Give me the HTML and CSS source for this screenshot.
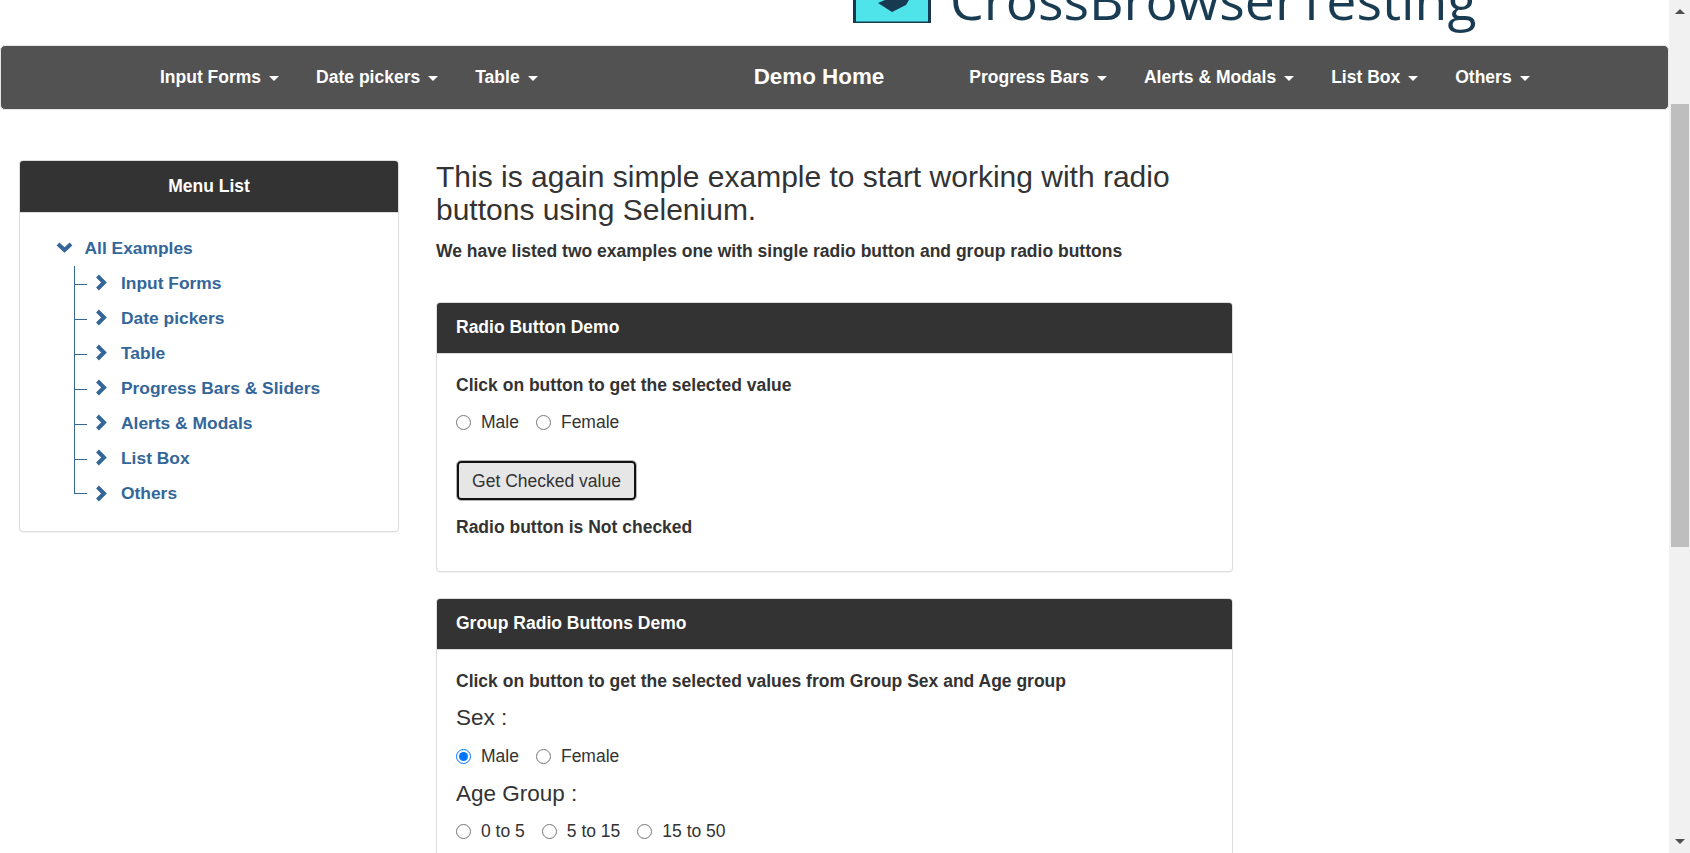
FILE: index.html
```html
<!DOCTYPE html>
<html lang="en">
<head>
    <meta charset="UTF-8">
    <title>Radio buttons demo</title>
    <link rel="stylesheet" href="styles.css">
</head>
<body>
    <div class="page">
        <!-- logo, page is scrolled so the top is cut off -->
        <div class="logo-row">
            <svg class="logo-icon" width="78" height="23" viewBox="0 0 78 23">
                <rect x="1.500" y="-20" width="75" height="43" fill="#4fe3ea" stroke="#173a50" stroke-width="3"/>
                <path d="M25 3 L32 0 L56 0 L53 5 L39 12 Z" fill="#173a50"/>
            </svg>
            <span class="logo-text">CrossBrowserTesting</span>
        </div>

        <nav class="navbar">
            <a class="nav-link nav-input">Input Forms<span class="caret"></span></a>
            <a class="nav-link nav-date">Date pickers<span class="caret"></span></a>
            <a class="nav-link nav-table">Table<span class="caret"></span></a>
            <a class="nav-brand">Demo Home</a>
            <a class="nav-link nav-progress">Progress Bars<span class="caret"></span></a>
            <a class="nav-link nav-alerts">Alerts &amp; Modals<span class="caret"></span></a>
            <a class="nav-link nav-list">List Box<span class="caret"></span></a>
            <a class="nav-link">Others<span class="caret"></span></a>
        </nav>

        <div class="content">
            <aside class="panel side-panel">
                <div class="panel-heading menu-heading">Menu List</div>
                <div class="tree-body">
                    <div class="tree-root">
                        <svg class="chev-down" width="17" height="11" viewBox="0 0 17 11"><path d="M2 2 L8.500 8 L15 2" fill="none" stroke="#369" stroke-width="4"/></svg>
                        <a>All Examples</a>
                    </div>
                    <ul class="tree">
                        <li><svg class="chev" width="12" height="17" viewBox="0 0 12 17"><path d="M2.500 2 L9 8.500 L2.500 15" fill="none" stroke="#369" stroke-width="4"/></svg><a>Input Forms</a></li>
                        <li><svg class="chev" width="12" height="17" viewBox="0 0 12 17"><path d="M2.500 2 L9 8.500 L2.500 15" fill="none" stroke="#369" stroke-width="4"/></svg><a>Date pickers</a></li>
                        <li><svg class="chev" width="12" height="17" viewBox="0 0 12 17"><path d="M2.500 2 L9 8.500 L2.500 15" fill="none" stroke="#369" stroke-width="4"/></svg><a>Table</a></li>
                        <li><svg class="chev" width="12" height="17" viewBox="0 0 12 17"><path d="M2.500 2 L9 8.500 L2.500 15" fill="none" stroke="#369" stroke-width="4"/></svg><a>Progress Bars &amp; Sliders</a></li>
                        <li><svg class="chev" width="12" height="17" viewBox="0 0 12 17"><path d="M2.500 2 L9 8.500 L2.500 15" fill="none" stroke="#369" stroke-width="4"/></svg><a>Alerts &amp; Modals</a></li>
                        <li><svg class="chev" width="12" height="17" viewBox="0 0 12 17"><path d="M2.500 2 L9 8.500 L2.500 15" fill="none" stroke="#369" stroke-width="4"/></svg><a>List Box</a></li>
                        <li><svg class="chev" width="12" height="17" viewBox="0 0 12 17"><path d="M2.500 2 L9 8.500 L2.500 15" fill="none" stroke="#369" stroke-width="4"/></svg><a>Others</a></li>
                    </ul>
                </div>
            </aside>

            <main class="main-col">
                <h3 class="page-title">This is again simple example to start working with radio buttons using Selenium.</h3>
                <p class="intro">We have listed two examples one with single radio button and group radio buttons</p>

                <section class="panel demo-panel first-demo">
                    <div class="panel-heading">Radio Button Demo</div>
                    <div class="panel-body">
                        <p class="bold-line">Click on button to get the selected value</p>
                        <div class="radio-row single-row">
                            <label><input type="radio" name="one">Male</label>
                            <label><input type="radio" name="one">Female</label>
                        </div>
                        <button class="btn" type="button">Get Checked value</button>
                        <p class="bold-line result">Radio button is Not checked</p>
                    </div>
                </section>

                <section class="panel demo-panel">
                    <div class="panel-heading">Group Radio Buttons Demo</div>
                    <div class="panel-body">
                        <p class="bold-line">Click on button to get the selected values from Group Sex and Age group</p>
                        <h4 class="group-title sex-title">Sex :</h4>
                        <div class="radio-row">
                            <label><input type="radio" name="sex" checked>Male</label>
                            <label><input type="radio" name="sex">Female</label>
                        </div>
                        <h4 class="group-title age-title">Age Group :</h4>
                        <div class="radio-row">
                            <label><input type="radio" name="age">0 to 5</label>
                            <label><input type="radio" name="age">5 to 15</label>
                            <label><input type="radio" name="age">15 to 50</label>
                        </div>
                    </div>
                </section>
            </main>
        </div>
    </div>

    <div class="scrollbar">
        <span class="arrow-up"></span>
        <div class="thumb"></div>
        <span class="arrow-down"></span>
    </div>
</body>
</html>
```

FILE: styles.css
```css
html, body {
    height: 100%;
    margin: 0;
    overflow: hidden;
}

body {
    display: flex;
    font-family: "Liberation Sans", Arial, sans-serif;
    font-size: 17.5px;
    color: #333;
    background: #fff;
}

.page {
    flex: 1;
    height: 853px;
    overflow: hidden;
}

/* logo */
.logo-row {
    display: flex;
    align-items: flex-start;
    height: 45px;
    padding-left: 853px;
    overflow: hidden;
}

.logo-icon {
    flex: none;
}

.logo-text {
    margin: -40px 0 0 19px;
    font-family: "Open Sans", sans-serif;
    font-size: 53.6px;
    line-height: 80px;
    color: #1a3c52;
}

/* navbar */
.navbar {
    display: flex;
    align-items: center;
    height: 65px;
    padding-left: 159px;
    background: #525252;
    border-radius: 5px;
    box-sizing: border-box;
    border: 1px solid #e7e7e7;
    font-weight: bold;
    color: #fff;
}

.nav-link {
    margin-right: 37px;
}

.nav-brand {
    margin: 0 85px 2px 0;
    font-size: 22.4px;
}

.nav-table {
    margin-right: 216px;
}

.caret {
    display: inline-block;
    margin-left: 8px;
    vertical-align: middle;
    border-top: 5px solid #fff;
    border-left: 5px solid transparent;
    border-right: 5px solid transparent;
}

/* layout */
.content {
    display: flex;
    align-items: flex-start;
    padding: 50px 0 0 19px;
}

.panel {
    box-sizing: border-box;
    border: 1px solid #ddd;
    border-radius: 4px;
    background: #fff;
    box-shadow: 0 1px 1px rgba(0, 0, 0, .05);
}

.panel-heading {
    height: 51px;
    padding: 0 19px;
    line-height: 49px;
    background: #333;
    color: #fff;
    font-weight: bold;
    border-radius: 3px 3px 0 0;
    border-bottom: 1px solid #ddd;
    box-sizing: border-box;
}

/* side menu */
.side-panel {
    flex: none;
    width: 380px;
    height: 372px;
    margin-right: 37px;
}

.menu-heading {
    height: 52px;
    line-height: 50px;
    text-align: center;
}

.tree-body {
    padding: 18px 0 0 36px;
    color: #369;
    font-size: 17.4px;
    font-weight: bold;
}

.tree-root {
    display: flex;
    align-items: center;
    height: 35px;
}

.chev-down {
    margin-right: 11.5px;
    position: relative;
    top: -1px;
}

.tree {
    list-style: none;
    margin: 0 0 0 18px;
    padding: 0;
}

.tree li {
    position: relative;
    display: flex;
    align-items: center;
    height: 35px;
    padding-left: 20px;
    border-left: 1px solid #369;
}

.tree li:last-child {
    height: 18px;
    margin-bottom: 17px;
    overflow: visible;
}

.tree li::before {
    content: "";
    position: absolute;
    left: 0;
    top: 50%;
    width: 12px;
    border-top: 1px solid #369;
}

.tree li:last-child::before {
    top: auto;
    bottom: 0;
}

.tree li:last-child a {
    position: relative;
    top: 8.500px;
}

.tree li:last-child .chev {
    position: relative;
    top: 8px;
}

.chev {
    flex: none;
    margin-right: 14px;
    position: relative;
    top: -1px;
}

/* main column */
.main-col {
    width: 797px;
}

.page-title {
    margin: 0;
    font-size: 30px;
    font-weight: normal;
    line-height: 33px;
}

.intro {
    margin: 13px 0 0;
    font-weight: bold;
    line-height: 24px;
}

.demo-panel {
    height: 270px;
    margin-top: 26px;
}

.first-demo {
    margin-top: 39px;
}

.demo-panel + .demo-panel {
    height: 400px;
}

.panel-body {
    padding: 19px 19px 0;
}

.bold-line {
    margin: 0;
    font-weight: bold;
    line-height: 24px;
}

.radio-row {
    display: flex;
    gap: 17px;
    height: 24px;
    margin-top: 13px;
    align-items: center;
}

.single-row {
    margin-bottom: 26px;
}

.radio-row label {
    display: flex;
    align-items: center;
}

.radio-row input {
    width: 15px;
    height: 15px;
    margin: 0 10px 0 0;
}

.btn {
    display: block;
    box-sizing: border-box;
    width: 181px;
    height: 41px;
    padding: 1px 0 0;
    background: #e6e6e6;
    border: 1px solid #b5b5b5;
    border-radius: 5px;
    box-shadow: inset 0 0 0 2px #111;
    color: #333;
    font: inherit;
}

.result {
    margin-top: 14px;
}

.group-title {
    font-size: 22.5px;
    font-weight: normal;
    line-height: 24px;
}

.sex-title {
    margin: 13px 0 14px;
}

.age-title {
    margin: 13.5px 0 14px;
}

/* page scrollbar */
.scrollbar {
    position: relative;
    flex: none;
    width: 21px;
    height: 853px;
    background: #f1f1f1;
}

.thumb {
    position: absolute;
    left: 2px;
    right: 1px;
    top: 104px;
    height: 443px;
    background: #bebebe;
}

.arrow-up,
.arrow-down {
    position: absolute;
    left: 6px;
    border-left: 5px solid transparent;
    border-right: 5px solid transparent;
}

.arrow-up {
    top: 9px;
    border-bottom: 5px solid #505050;
}

.arrow-down {
    bottom: 9px;
    border-top: 5px solid #505050;
}
```
